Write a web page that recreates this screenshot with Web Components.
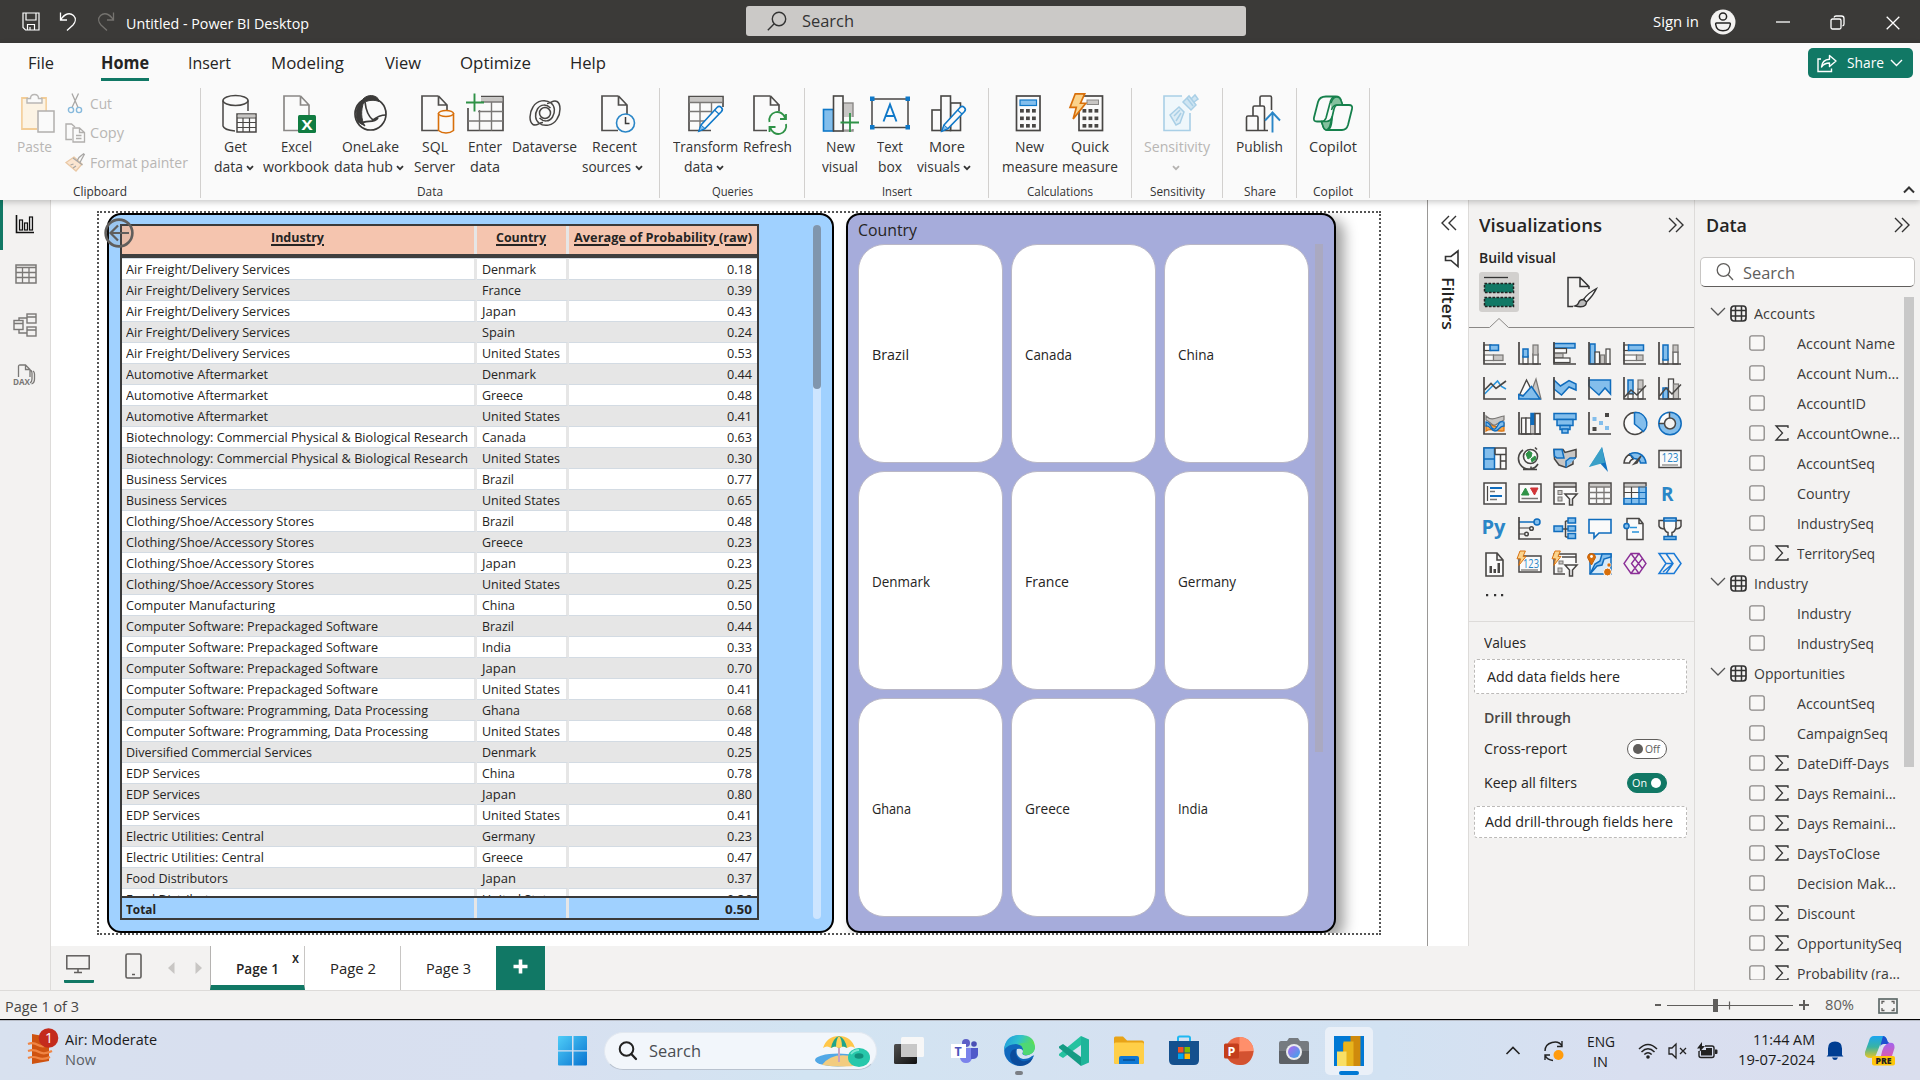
<!DOCTYPE html>
<html lang="en">
<head>
<meta charset="utf-8">
<title>Untitled - Power BI Desktop</title>
<style>
html,body{margin:0;width:1920px;height:1080px;overflow:hidden;background:#f3f2f1;font-family:"Open Sans","Noto Sans",sans-serif}
</style>
</head>
<body>
<power-bi-desktop></power-bi-desktop>
<script>
const BASE = `*{box-sizing:border-box}:host{display:block;box-sizing:border-box}.r{display:flex;align-items:center}.r>div{flex:none;display:flex;align-items:center}.c{display:flex;flex-direction:column}.c>div{flex:none;display:flex;align-items:center}`;
const define = (name, css, html) => customElements.define(name, class extends HTMLElement {
  connectedCallback() {
    if (this.shadowRoot) return;
    this.attachShadow({mode: 'open'}).innerHTML = `<style>${BASE}${css}</style>${typeof html === 'function' ? html(this) : html}`;
  }
});
/* horizontal and vertical flow helpers: each item is [start, size, html, style] */
const row = (x0, items, st = '') => { let c = x0; return `<div class="r" style="${st}">` + items.map(([x, w, h, s = '']) => { const m = x - c; c = x + w; return `<div style="margin-left:${m}px;width:${w}px;${s}">${h}</div>`; }).join('') + '</div>'; };
const col = (y0, items, st = '') => { let c = y0; return `<div class="c" style="${st}">` + items.map(([y, w, h, s = '']) => { const m = y - c; c = y + w; return `<div style="margin-top:${m}px;height:${w}px;${s}">${h}</div>`; }).join('') + '</div>'; };
const T = (w, s, t, c = '#252423', b = 400, f = '') => `<ui-text w="${w}" style="font-size:${s}px;color:${c};font-weight:${b};${f}">${t}</ui-text>`;
const I = (n) => `<ui-icon n="${n}"></ui-icon>`;
const at = (base, s, html, st = '') => [base - 0.388 * s - 10, 20, html, st];

/* single-line text whose advance is fitted to a fixed width */
customElements.define('ui-text', class extends HTMLElement {
  connectedCallback() {
    if (!this.shadowRoot) this.attachShadow({mode: 'open'}).innerHTML = `<style>:host{display:inline-block;flex:none;white-space:nowrap;line-height:20px;height:20px}span{display:inline-block;transform-origin:0 50%}</style><span><slot></slot></span>`;
    const w = +this.getAttribute('w'), s = this.shadowRoot.querySelector('span');
    if (!w) return;
    this.style.width = w + 'px';
    const n = parseFloat(getComputedStyle(s).width);
    if (n) s.style.transform = `scaleX(${w / n})`;
  }
});

const K = '#484644', B = '#0f6cbd', F = '#83beec', G = '#c8c6c4', GS = '#797775', W = '#fafafa', OR = '#d86f0a';
const p = (d, s = K, f = 'none', w = 1.5, x = '') => `<path d="${d}" stroke="${s}" fill="${f}" stroke-width="${w}" ${x}/>`;
const re = (x, y, w, h, s = K, f = 'none', sw = 1.5, e = '') => `<rect x="${x}" y="${y}" width="${w}" height="${h}" stroke="${s}" fill="${f}" stroke-width="${sw}" ${e}/>`;
const ci = (x, y, r, s = K, f = 'none', w = 1.5) => `<circle cx="${x}" cy="${y}" r="${r}" stroke="${s}" fill="${f}" stroke-width="${w}"/>`;
const tx = (x, y, s, t, f, b = 400, e = '') => `<text x="${x}" y="${y}" font-size="${s}" fill="${f}" font-weight="${b}" font-family="Open Sans,sans-serif" ${e}>${t}</text>`;
const doc = p('M18.5 3H2V37.5H18M18.5 3V12H27M18.5 3L27 12V22', '#504e4c', 'none', 1.7);
const pencil = p('M14 32L30 14.5q2-2 4.2-.2t.3 4.3L18 35.5l-6 2.5z', '#0f78c8', W, 1.6) + p('M14 32l4 3.5-6 2.5z', '#0f78c8', F, 1) + p('M27.5 17l4.5 4', '#0f78c8', 'none', 1.2);
const bolt = (x, y, k) => `<path transform="translate(${x} ${y}) scale(${k})" d="M5 0h9l-4 9h5L3 24l3-11H0z" fill="#fbd38b" stroke="${OR}" stroke-width="1.6"/>`;
const ax = p('M1 0V22H23', K, 'none', 1.7);
const keys = (x, y, c) => { let s = ''; for (let i = 0; i < 3; i++) for (let j = 0; j < 3; j++) s += `<rect x="${x + i * 6}" y="${y + j * 7.5}" width="3.8" height="3.6" fill="${c}"/>`; return s; };
const ICONS = {
  save: [18, 19, p('M1 1H17V18H3.5L1 15.5zM4 1V8H14V1M5.5 18V12.500H12.500V18M8 18v-3', '#fff', 'none', 1.2)],
  undo: [18, 20, p('M1.500 .5V8H8M1.500 8C6 1 11 .5 14.500 3.500c3 3 1.800 7-.5 9.500L8 18.500', '#fff', 'none', 1.3)],
  redo: [18, 20, p('M16.500 .5V8H10M16.500 8C12 1 7 .5 3.500 3.500c-3 3-1.800 7 .5 9.500L10 18.500', '#75736f', 'none', 1.3)],
  search: [20, 20, ci(12, 8, 6.7, '#333', 'none', 1.4) + p('M7.200 12.800L.800 19.200', '#333', 'none', 1.4)],
  searchr: [18, 18, ci(7.500, 7, 6.300, '#605e5c', 'none', 1.3) + p('M12 11.500L17 17', '#605e5c', 'none', 1.3)],
  searcht: [20, 20, ci(8.500, 8, 6.800, '#222', 'none', 2) + p('M13.300 13L18 18', '#222', 'none', 2.300, 'stroke-linecap="round"')],
  user: [26, 26, ci(13, 13, 12.500, 'none', '#f3f2f1') + ci(13, 7.500, 3.600, '#252423', 'none', 1.5) + p('M6.500 14h13q1 0 .8 1.500c-.5 4-3.300 6.200-7.300 6.200s-6.800-2.200-7.300-6.200q-.2-1.500.8-1.500z', '#252423', 'none', 1.5)],
  min: [14, 14, p('M0 7H14', '#fff', 'none', 1.3)],
  restore: [15, 15, re(1, 4, 10, 10, '#fff', 'none', 1.3, 'rx="1.500"') + p('M4 2.500q.5-1.500 2-1.500h5.500q2.500 0 2.500 2.500V9q0 1.500-1.500 2', '#fff', 'none', 1.3)],
  close: [14, 14, p('M.7.7L13.300 13.300M13.300.7L.7 13.300', '#fff', 'none', 1.3)],
  share: [20, 20, p('M4 6H1V18.500H14.500V15.500', '#fff', 'none', 1.4) + p('M4.500 14c.5-5 3.500-7.500 8-7.700V2.500L19 8l-6.500 5.500V10C9 10 6.500 11 4.500 14z', '#fff', 'none', 1.4, 'stroke-linejoin="round"')],
  chevw: [13, 8, p('M1 1L6.500 6.500L12 1', '#fff', 'none', 1.4)],
  chev: [8, 6, p('M1 1.200L4 4.200L7 1.200', '#333', 'none', 1.8)],
  chevg: [8, 6, p('M1 1.200L4 4.200L7 1.200', '#b5b3b1', 'none', 1.8)],
  up: [12, 8, p('M1 6.500L6 1.500L11 6.500', '#333', 'none', 2)],
  paste: [36, 42, p('M8 5H2V36H17M21 5h5V18', '#f3cd97', 'none', 1.8) + re(2.800, 6, 22.500, 29, 'none', '#fcf3e4') + p('M7 10V5.500H10.500q0-4 4-4t4 4H22V10z', '#b9b7b5', W, 1.4) + re(18, 18, 16, 21, '#b1afad', W, 1.5)],
  cut: [14, 21, p('M4 .5L10 14.500M10.500 .5L4 14.500', '#a9a7a5', 'none', 1.3) + ci(3, 17, 2.600, '#86b9dc', 'none', 1.4) + ci(11, 17, 2.600, '#86b9dc', 'none', 1.4)],
  copy: [21, 20, p('M7 16.500H1V1H6.500l3.500 3', '#b1afad', 'none', 1.4) + p('M8 5H14.500L19.500 9.500V19H8zM14.500 5V9.500H19.500M11 12.500h5.500M11 15.500h5.500', '#b1afad', 'none', 1.3)],
  painter: [20, 19, p('M9 4L17 11 11 18 1 9.500z', '#eac9a6', '#fbe5d0', 1.3) + p('M8 5L17.500 12M12 8L14 4.500 18.500.8 19.300 1.500 16.500 6.500 15 9.500M5.500 12l3-1M8 15l3-2', '#a9a7a5', 'none', 1.3)],
  getdata: [36, 42, '<ellipse cx="14.500" cy="7.500" rx="12.500" ry="5" stroke="#484644" fill="none" stroke-width="1.500"/>' + p('M2 7.500V33q1 4 12 5M27 7.500V18', K) + re(16, 21, 19, 18, K, W) + re(16.800, 21.500, 17.500, 3, 'none', G) + p('M16 25H35M16 29.500H35M16 34.500H35M22 25V39M28.500 25V39', K, 'none', 1.200)],
  excel: [36, 42, doc.replaceAll('#504e4c', '#8a8886') + re(16, 22, 18, 18, 'none', '#107c41', 0, 'rx="1.500"') + tx(19.500, 36.500, 15, 'X', '#fff', 700, 'textLength="11" lengthAdjust="spacingAndGlyphs"')],
  onelake: [36, 42, '<ellipse cx="18.500" cy="21" rx="15.500" ry="16" fill="none" stroke="#3b3a39" stroke-width="1.700"/>' + p('M11 6c5-5 12-4 15-.5l1 3C22 6.500 16 7 11 10z', '#3b3a39', '#3b3a39', 1) + p('M10 7C5 12 2 21 6 29l7 4C9 27 8.500 17 12 8.500z', '#3b3a39', '#3b3a39', 1) + p('M13 9c1 9 4 15 8 18q6-5 13-5M9 31c4-5 13 0 17-6', '#3b3a39', 'none', 1.700)],
  sql: [36, 42, doc + p('M18.500 20V37.500q3 2.500 7.500 2.500t7.500-2.500V20', OR, W, 1.600) + `<ellipse cx="26" cy="20.500" rx="7.500" ry="3" stroke="${OR}" fill="${W}" stroke-width="1.600"/>`],
  enter: [40, 42, p('M2 15V37.500H37V3.500H15', '#504e4c', 'none', 1.700) + re(15, 4.500, 21.500, 4.500, 'none', G) + p('M15 9H37M12 18.500H37M2 28H37M13.500 17V37.500M25.500 9V37.500', '#797775', 'none', 1.400) + p('M8.500 .5V18.500M0 9.500H18', '#2f9247', 'none', 1.900)],
  dataverse: [38, 42, ci(18, 20, 5.500, K, 'none', 1.500) + p('M24 10c-5-4-14-3-18 4-4 6-4 15 0 17.500 4 2 6-2 10-2M12 30c5 4 14 3 18-4 4-6 4-15 0-17.500-4-2-6 2-10 2M24 10c4 3 4.500 9 1.500 14-3 5-9 5-13 1M12 30c-4-3-4.500-9-1.500-14 3-5 9-5 13-1', K, 'none', 1.500)],
  recent: [38, 42, doc + ci(25.500, 30, 9, '#2a86c7', W, 1.600) + p('M25.500 24V30.500H29.500', '#3b3a39', 'none', 1.500)],
  transform: [38, 42, p('M24 37.500H2V3.500H36V14', '#504e4c', 'none', 1.700) + re(2.800, 4.300, 32.500, 5, 'none', G) + p('M2 9.500H36M2 18.500H25M2 28H18M13 9.500V37.500M24.500 9.500V20', '#797775', 'none', 1.400) + pencil],
  refresh: [38, 42, p('M18.500 3H2V37.500H15M18.500 3V12H27V18M18.500 3L27 12', '#504e4c', 'none', 1.700) + p('M17.500 29a8 8 0 0 1 15.500-4M34 21v5h-6M34 31a8 8 0 0 1-15.500 4M17.500 39v-5h6', '#2f9247', 'none', 1.800)],
  newvisual: [40, 42, re(1.500, 16.500, 10, 21.500, '#0f78c8', F, 1.600) + re(21, 10, 10, 28, '#8a8886', G, 1.400) + re(11.500, 3, 9.500, 35, K, W, 1.600) + re(22, 24, 14, 12, 'none', W, 0) + p('M28 20V39M18.500 29.500H37', '#2f9247', 'none', 1.800)],
  textbox: [42, 42, re(3, 6, 36, 28.500, K, W, 1.500) + ['1,3.500', '36.500,3.500', '1,32', '36.500,32'].map(a => { const [x, y] = a.split(',').map(Number); return re(x, y, 4.500, 4.500, 'none', '#0f78c8'); }).join('') + p('M14.500 28.500L21 11.500L27.500 28.500M16.700 23H25.300', '#0f78c8', 'none', 1.900)],
  morevisuals: [38, 42, re(2, 17, 9, 20.500, K, W, 1.600) + re(20.500, 10, 10, 27.500, K, W, 1.600) + re(11, 3, 9.500, 34.500, K, W, 1.600) + pencil],
  calc: [27, 42, re(1.500, 3, 23.500, 34.500, K, W, 1.700) + re(5, 7, 16.500, 5.500, '#0f78c8', F, 1.200) + keys(5, 16, K)],
  quick: [34, 42, re(9, 3, 23.500, 34.500, K, W, 1.700) + re(17, 7, 11.500, 4.500, '#8a8886', G, 1) + keys(12.500, 16, K) + bolt(0, .8, 1.05)],
  sens: [38, 42, p('M20 3H2V37.500H28V20', '#a9cfe6', '#eff7fb', 1.600) + p('M21 9L27 3L34 12L29 17zM29 6L33 2L36 6L32 9M25 5L31 13', '#a9cfe6', '#cfe5f2', 1.500) + p('M8 22l9-8 5 5-4 11-4 2zM12 23l6-6M14 28l5-8', '#a9cfe6', '#dcecf5', 1.500)],
  publish: [38, 42, p('M16 13V4.500q0-1.500 1.500-1.500H26q1.500 0 1.500 1.500V17M9 23V14.500q0-1.500 1.500-1.500H19q1.500 0 1.500 1.500V37.500M2.500 37.500V24.500q0-1.500 1.500-1.500H12.500q1.500 0 1.500 1.500V37.500zM14 37.500H24', K, 'none', 1.600) + p('M28.500 39.500V20M21 27.500L28.500 19.500L36 27.500', '#2a86c7', 'none', 1.900)],
  copilot: [42, 42, p('M14 3.500H24q4 0 5 4l1.500 4.500H37q4 0 3 4L36 32q-1.500 5-6 5H16q-4 0-5-4l-1.500-4.500H5q-4 0-3-4L6 9q1.500-5.500 8-5.500z', '#16804c', W, 1.800) + p('M19 10q2-6 6-6 3 0 4 3.500l1.500 4.500H25q-4 0-5.500 5', '#16804c', '#84c19e', 1.500) + p('M9.500 28.500H14q5 0 6-5 0 13-5 13.500-3 0-4-4z', '#16804c', '#84c19e', 1.500) + p('M22 4q-3 1-4 6l-4 15q-1.500 4-5 3.500M30.500 12H26q-3 0-4 4L18.500 31q-1 5-4 6', '#16804c', 'none', 1.700)],
  rail1: [20, 19, p('M1.500 0V17.500H19', '#111', 'none', 1.600) + re(4.500, 5, 3, 10, '#111', '#ddd', 1.200) + re(9.500, 8, 3, 7, '#111', '#ddd', 1.200) + re(14.500, 2, 3, 13, '#111', '#ddd', 1.200)],
  rail2: [22, 20, re(1, 1, 20, 18, '#7a7876', 'none', 1.500) + p('M1 3.500H21M1 8.500H21M1 13.500H21M7.500 4V19M14 4V19', '#7a7876', 'none', 1.300)],
  rail3: [24, 24, re(1, 7.500, 9, 9, '#7a7876', 'none', 1.400) + re(14, 1, 9, 9, '#7a7876', 'none', 1.400) + re(14, 14, 9, 9, '#7a7876', 'none', 1.400) + p('M1 10.500H10M14 4H23M14 17H23M6 7V5H14M6 17V20H14', '#7a7876', 'none', 1.400)],
  rail4: [24, 22, p('M5.500 13V2.500Q5.500 1 7 1H12.500L17 5.500V13M12.500 1V5.500H17M17 6q2 .5 2 3V15q0 3-2 4M20 7q1.500 1 1.500 3V15q0 4-3 5', '#7a7876', 'none', 1.300) + tx(0, 20.500, 9, 'DAX', '#7a7876', 700, 'textLength="17" lengthAdjust="spacingAndGlyphs"')],
  back: [30, 30, ci(15, 15, 13.400, '#605e5c', 'rgba(120,120,120,.12)', 2.600) + p('M25 15H7M14 7.500L6.500 15L14 22.500', '#605e5c', 'none', 2.200)],
  ll: [16, 16, p('M8 1L1 8L8 15M15 1L8 8L15 15', '#333', 'none', 1.400)],
  rr: [16, 16, p('M1 1L8 8L1 15M8 1L15 8L8 15', '#333', 'none', 1.400)],
  funnel: [16, 18, p('M14 1V16.500L7 10.500H1.500V6.500H7z', '#333', 'none', 1.600)],
  build: [40, 40, p('M5 5.500H29', '#333', 'none', 1.300) + re(5.500, 11.500, 29, 9, '#222', '#117865', 1.500, 'stroke-dasharray="2.500 1.500"') + re(5.500, 25.500, 29, 9, '#222', '#117865', 1.500, 'stroke-dasharray="2.500 1.500"')],
  format: [32, 32, p('M7 30.500H2V1.500H14L23 10.500V13M14 1.500V10.500H23', '#333', 'none', 1.500) + p('M30.500 12.500Q22 17 17.500 23.500l3 2.500Q27 20 30.500 12.500z', '#333', W, 1.400) + p('M17.500 23.500q-4 0-5 3.500-.5 2-3.500 3 8 2 10.500-1 1-1.500 1-3z', '#333', '#bbb', 1.400)],
  v1: [24, 24, re(1, 3, 7, 5.500, K, W, 1.200) + re(7, 3, 8.500, 5.500, B, F) + re(1, 13, 9.500, 5.500, GS, W, 1.200) + re(10.500, 13, 9.500, 5.500, GS, G, 1.200) + ax],
  v2: [24, 24, re(5, 14, 5, 8, K, W, 1.200) + re(5, 7, 5, 8, B, F) + re(15, 12, 5, 10, K, W, 1.200) + re(15, 3, 5, 10, GS, G, 1.200) + ax],
  v3: [24, 24, re(1, 1.500, 21, 4.500, B, F) + re(1, 6.500, 12.500, 4.500, K, W, 1.200) + re(1, 11.500, 9, 4.500, GS, G, 1.200) + re(1, 16, 16, 4.500, K, W, 1.200) + ax],
  v4: [24, 24, re(2, 2, 5, 20, B, F) + re(7, 10, 4.500, 12, K, W, 1.200) + re(12.500, 13, 4, 9, GS, G, 1.200) + re(18, 7, 4, 15, K, W, 1.200) + ax],
  v5: [24, 24, re(1, 3, 5, 5.500, K, W, 1.200) + re(5.500, 3, 15, 5.500, B, F) + re(1, 13, 12.500, 5.500, GS, W, 1.200) + re(13.500, 13, 6.500, 5.500, GS, G, 1.200) + ax],
  v6: [24, 24, re(5, 17, 5, 5, K, W, 1.200) + re(5, 3, 5, 15, B, F) + re(15, 10, 5, 12, K, W, 1.200) + re(15, 3, 5, 7, GS, G, 1.200) + ax],
  v7: [24, 24, p('M1.500 17L14.500 4L18.500 9.500L23 12', '#2a94dc', 'none', 1.600) + p('M1.500 13L8 6.500L13 11.500L23 4', K, 'none', 1.600) + ax],
  v8: [24, 24, p('M12 18L18 2L23 22H12z', GS, G, 1.200) + p('M1.500 18L8.500 3L17 20z', K, W, 1.400) + p('M.8 22V17.500L5 19L13.500 9.500L22 22z', B, F)],
  v9: [24, 24, p('M1 3L7.500 9L16 3.500L23 7V13L16 10L8.500 18L1 12z', B, F) + ax],
  v10: [24, 24, p('M1 3H22.500V17L17 11L11 18L1 9z', B, F) + ax],
  v11: [24, 24, re(5, 3, 5, 14, B, F) + re(5, 17, 5, 5, K, W, 1.200) + re(15, 12, 5, 10, K, W, 1.200) + re(15, 3, 5, 9, GS, G, 1.200) + p('M1.500 20L8 13L14 18L23 8.500', K, 'none', 1.500) + ax],
  v12: [24, 24, re(5, 11, 5, 11, B, F) + re(10.500, 2, 5, 20, K, W, 1.300) + re(15.500, 7, 5, 15, GS, G, 1.200) + p('M1.500 19L8 11L14 17L23 7.500', K, 'none', 1.500) + ax],
  v13: [24, 24, p('M3 14C8 8 12 20 21 12V19C12 20 8 15 3 19z', OR, '#f7a54a', 1.200) + p('M3 8C7 9 10 16 14 12L21 8V4C14 5 9 10 3 4z', GS, G, 1.200) + p('M3 10c5 0 5 9 9 7 4-3 3-9 9-7v4c-5 0-5 5-9 5s-5-6-9-5z', B, F, 1.300) + ax],
  v14: [24, 24, re(3.500, 6, 4.500, 16, K, W, 1.300) + re(8, 6, 5, 16, K, W, 1.300) + re(13, 1.500, 3, 11, B, B) + re(17, 1.500, 5, 20.500, K, W, 1.500) + re(13, 13, 3, 9, 'none', G) + ax],
  v15: [24, 24, re(1, 1.500, 22, 6, B, F) + re(4, 7.500, 16, 6, B, F) + re(7, 13.500, 10, 4, B, F) + re(9, 17, 6, 4, B, F)],
  v16: [24, 24, re(17, 1, 4, 4, 'none', K) + re(4.500, 5, 4, 4, 'none', F) + re(11, 9, 4, 4, 'none', F) + re(4.500, 15, 4, 4, 'none', K) + re(17, 14, 4, 4, 'none', F) + ax],
  v17: [24, 24, ci(12, 11.500, 11, K, W, 1.500) + p('M11.500 .7A11 11 0 0 1 20.500 19.500L11.500 12z', B, F)],
  v18: [24, 24, ci(12, 11.500, 8.500, F, 'none', 5) + p('M12 3A8.500 8.500 0 0 0 3.500 11.500', W, 'none', 5) + ci(12, 11.500, 11.200, B) + ci(12, 11.500, 5.500, K) + p('M.8 11.500H6.500M11.500 .3V6', K)],
  v19: [24, 24, re(1, 1, 22, 21, K, W) + re(1, 1, 10.500, 21, B, F) + p('M1 12H11.500', B) + p('M12 7.500H23M12 7.500V1M17.500 7.500V22M17.500 14H23', K)],
  v20: [24, 24, p('M5 3A10.500 10.500 0 1 0 20 17M13 19.500v3M5 22.500H19M17 .5l2 2', K, 'none', 1.600) + ci(12.500, 9.500, 7, K, W, 1.600) + p('M8 7l3-3 3 2-1 4-3 2zM13 12l4-3 1 3-4 3z', '#2f9247', '#2f9247', 1)],
  v21: [24, 24, p('M1 2.500H10L12 5.500L23 2.500V10L20 13V17L13 20.500L6 18L1.500 12z', K, G) + p('M1 2.500H9L11 11H4L1.500 9zM13 20.500V14L17 11H23', B, F)],
  v22: [24, 26, '<path d="M14 0L1 20L11 15z" fill="#4bb4d3"/><path d="M14 0L11 15L20 25z" fill="#0f72c0"/><path d="M14 0L1 20L17 15.500z" fill="#3aa0c8"/>'],
  v23: [24, 24, p('M1 16A11 11 0 0 1 7 7L10 12Q7 13 6.500 16z', K, W) + p('M7 7Q12 4.500 17 7T23 16H17.500Q17 12 11 11.500z', B, F) + p('M11 17L18 9L14 16z', K, K)],
  v24: [24, 24, re(1, 3.500, 22, 17, K, W) + tx(3.500, 15, 12.500, '123', '#2a86c7', 400, 'textLength="17" lengthAdjust="spacingAndGlyphs"') + p('M4 18H20', '#8a8886', 'none', 1.300)],
  v25: [24, 24, re(1, 1, 22, 21, K, W) + p('M4.500 4V19', K, 'none', 1.200) + p('M7 6H19M7 14H19', B, 'none', 2.200) + p('M7 9.500H12M7 17.500H14', GS, 'none', 1.500)],
  v26: [24, 24, re(1, 2, 22, 18, K, W) + p('M3.500 13L7.500 6L11 13z', '#2f9247', '#2f9247', 1) + p('M12.500 6H20L16.500 13z', '#d13438', '#d13438', 1) + p('M3.500 16.500H20', GS)],
  v27: [24, 24, p('M12 22H1V1H23V10', K, W) + re(2, 2, 20, 2.500, 'none', G) + p('M1 5H23', K) + re(5, 8.500, 4, 4, GS, G, 1) + re(5, 15, 4, 4, GS, G, 1) + p('M12 12H24L19.500 17V23H16.500V17z', K, W)],
  v28: [24, 24, re(1, 1, 22, 21, K, W) + re(2, 2, 20, 2.500, 'none', G) + p('M1 5H23M1 10.500H23M1 16.500H23M8.500 5V22M16 5V22', GS, 'none', 1.300)],
  v29: [24, 24, re(1, 1, 22, 21, K, W) + re(2, 2, 20, 2.500, 'none', G) + p('M16 5H23V22H1V16.500H16z', F, F) + p('M1 5H23M1 10.500H16M8.500 5V16.500', K, 'none', 1.200) + p('M1 16.500H23M16 5V22M8.500 16V22M16 10.500H23', B, 'none', 1.200) + p('M1 16V22H23V5', B)],
  v30: [24, 24, tx(3, 19, 20, 'R', '#2a86c7', 700, 'textLength="12.500" lengthAdjust="spacingAndGlyphs"')],
  v31: [24, 24, tx(-1.500, 17, 20, 'Py', '#2a86c7', 700, 'textLength="24" lengthAdjust="spacingAndGlyphs"')],
  v32: [24, 24, p('M1 5H16', B) + ci(19, 5, 3, B, F) + p('M1 11H12M1 17H7', GS) + ci(13.500, 11.500, 1.800, K, W) + ci(8.500, 17, 1.800, K, W) + ax],
  v33: [24, 24, p('M8 12H16M12.500 4V20M12.500 4H16M12.500 20H16', K) + re(1, 9, 8.500, 5.500, B, F) + re(15, 1, 7.500, 5, B, F) + re(15, 9, 7.500, 5, B, F) + re(15, 16.500, 7.500, 5, B, F)],
  v34: [24, 24, p('M1 2.500H23V16H11L6 21V16H1z', B, W, 1.600)],
  v35: [24, 24, p('M4 7V1.500H16L20 6.500V22.500H4V12M16 1.500V6.500H20', K, W) + ci(3.500, 9, 2.600, B, F) + p('M7 10.500H14M9 15H16', '#2a94dc', 'none', 1.300)],
  v36: [24, 24, p('M6 3.500H1V9Q2 12 7 12M18 3.500H23V9Q22 12 17 12', K) + p('M6 1.500H18V10Q17 15 14 15.500V19.500H10V15.500Q7 15 6 10z', K, W) + re(6, 1, 12, 3, B, F) + re(6, 19.500, 12, 3, B, F)],
  v37: [24, 25, p('M3 1H14L20 8V24H3zM14 1V8H20', K, W, 1.600) + re(6.500, 14, 2.500, 7, 'none', K) + re(10.500, 17, 2.500, 4, 'none', K) + re(14.500, 11, 2.500, 10, 'none', K)],
  v38: [24, 24, re(1, 4, 22, 16, K, W) + tx(5, 16, 12, '123', '#2a86c7', 400, 'textLength="16" lengthAdjust="spacingAndGlyphs"') + p('M3 18H20', '#8a8886') + bolt(-1, -1, .6)],
  v39: [24, 26, p('M12 22H1V2H23V11', K, W) + re(6, 9, 4, 3, GS, G, 1) + re(5, 16, 4, 4, GS, G, 1) + p('M9 5H23', K) + p('M12 13H24L19.500 18V24H16.500V18z', K, W) + bolt(-1, -1, .6)],
  v40: [24, 26, re(2, 2, 21, 20, B, '#d8ebf9') + p('M2 22L9 14l5-1 2-6 7-2V2L14 2l-2 7-5 3z', B, F) + p('M3.500 13L-.5 5.500a4 4 0 1 1 8 0z', '#c75f06', OR, 1) + ci(3.500, 4.500, 1.400, 'none', '#fff') + ci(21, 13, 2, '#fff', OR, .5) + ci(19.500, 20, 4, '#fff', OR, 1)],
  v41: [24, 24, p('M8 1.500h8L23 11.500 16 21.500H8L1 11.500zM12 7L15.500 11.500 12 16 8.500 11.500zM8 1.500L12 7 16 1.500M8 21.500L12 16 16 21.500M15.500 11.500L19 7M15.500 11.500L19 16', '#8b2f97', 'none', 1.400)],
  v42: [24, 24, p('M1 1.500H16L23 11.500L16 21.500H1L8 11.500zM8 11.500H15M8 1.500L15 11.500L8 21.500M15 11.500L5 20', '#1b7ad6', 'none', 1.500)],
  check: [16, 16, re(.8, .8, 14.400, 14.400, '#8a8886', '#f8f7f6', 1.300, 'rx="2"')],
  sigma: [14, 16, p('M13 3V1H1L7.500 8L1 15H13V13', '#333', 'none', 1.300)],
  tchev: [16, 9, p('M1 1L8 8L15 1', '#555', 'none', 1.300)],
  table: [17, 17, re(1, 1, 15, 15, '#333', 'none', 1.700, 'rx="3"') + p('M1 5.500H16M1 11H16M5.500 1V16M11.500 1V16', '#333', 'none', 1.500)],
  desktop: [24, 19, re(.8, .8, 22.400, 13, '#605e5c', 'none', 1.500) + p('M12 14V17.500M8 17.500H16', '#605e5c', 'none', 1.500)],
  phone: [17, 26, re(1, 1, 15, 24, '#605e5c', 'none', 1.600, 'rx="1.500"') + p('M7 21.500H10', '#605e5c', 'none', 1.500)],
  al: [7, 12, '<path d="M6.500 0V12L0 6z" fill="#c8c6c4"/>'],
  ar: [7, 12, '<path d="M.5 0V12L7 6z" fill="#c8c6c4"/>'],
  plus: [15, 15, p('M7.500 0.500V14.500M.5 7.500H14.500', '#fff', 'none', 3.600)],
  slider: [126, 16, p('M0 8.500H126M62.500 4.500V12.500', '#605e5c', 'none', 1.200) + re(46, 2, 5, 13, 'none', '#605e5c')],
  fit: [20, 16, re(1, 1, 18, 14, '#5f6b6a', 'none', 1.700) + p('M4 6V3.500H6.500M13.500 3.500H16V6M16 10V12.500H13.500M6.500 12.500H4V10', '#605e5c', 'none', 1.300)],
  zplus: [10, 10, p('M5 0V10M0 5H10', '#605e5c', 'none', 2)],
  zmin: [6, 4, p('M0 2H6', '#605e5c', 'none', 2)],
  weather: [32, 38, '<path d="M5 7L22 10V34L5 37z" fill="#cf5310"/>' + p('M1 17Q6 15 11 18T24 17M1 24Q7 22 12 25T25 24M1 31Q6 29 11 31T23 30', '#f08544', 'none', 2.200) + ci(21.500, 11, 9.800, 'none', '#c42b1c') + tx(18, 16, 14, '1', '#fff', 400)],
  win: [30, 30, '<defs><linearGradient id="g" x1="0" y1="0" x2="1" y2="1"><stop offset="0" stop-color="#4fcdf8"/><stop offset="1" stop-color="#0873d0"/></linearGradient></defs><path fill="url(#g)" d="M0 1q0-1 1-1H14V14.200H0zM15.500 0H28q1 0 1 1V14.200H15.500zM0 15.500H14V29.500H1q-1 0-1-1zM15.500 15.500H29V28.500q0 1-1 1H15.500z"/>'],
  beach: [56, 33, '<ellipse cx="24" cy="26" rx="23" ry="6.500" fill="#52a8e6"/><path d="M8 31Q18 17 42 23L46 31Q30 34 8 31z" fill="#f2cc80"/>' + p('M25 4V28', '#c9a3c0', 'none', 2) + '<path d="M9 14Q13 2 25 2T41 14Q37 11 33 14Q29 11 25 14Q21 11 17 14Q13 11 9 14z" fill="#ffc74a"/><path d="M17 14Q19 4 25 2Q31 4 33 14Q29 11 25 14Q21 11 17 14z" fill="#1fa58a"/><path d="M22 13Q22 5 25 2Q28 5 28 13L25 14z" fill="#ffd35a"/><ellipse cx="45" cy="23.500" rx="11" ry="9.500" fill="#27c8ab"/><ellipse cx="45" cy="22" rx="4.500" ry="2.800" fill="#128f7c"/>' + p('M37 20q3-4 8-4', '#7ae8d2', 'none', 2)],
  task: [30, 30, '<defs><linearGradient id="g" x1="0" y1="0" x2="1" y2="1"><stop offset="0" stop-color="#505050"/><stop offset="1" stop-color="#111"/></linearGradient></defs><rect x="0" y="8" width="23" height="20" rx="1.500" fill="url(#g)"/><rect x="7" y="1" width="23" height="20" rx="1.500" fill="#f7f7f7"/><rect x="7" y="8" width="16" height="13" fill="#c8c8c8"/>'],
  teams: [28, 26, ci(15, 5, 4, 'none', '#5b5fc7') + ci(23, 6, 2.800, 'none', '#4a4fb5') + '<path d="M9 10H21V20q-1 5-6 5t-6-5z" fill="#7b83eb"/><path d="M20 10H27V17q-1 4-5 4H20z" fill="#5059c9"/><rect x="0" y="6" width="15" height="14" fill="#fff"/>' + tx(3.500, 17.500, 12.500, 'T', '#4b53bc', 700)],
  edge: [31, 31, '<defs><linearGradient id="g" x1="0" y1="0" x2="1" y2=".3"><stop offset="0" stop-color="#1f97df"/><stop offset=".5" stop-color="#2fc1cf"/><stop offset="1" stop-color="#5fe04c"/></linearGradient></defs><circle cx="15.500" cy="15.500" r="15.300" fill="#1068bd"/><path d="M0 15Q1 0 16 0T31 13Q30 20 22 20Q18 20 19 17Q20 10 12 9Q4 9 0 15z" fill="url(#g)"/><path d="M12 14Q10 22 18 26Q24 27 29 23Q25 31 16 31Q6 30 6 20Q7 14 12 14z" fill="#0c4c9c"/><path d="M13 14Q11 22 19 24Q25 24 28 21L31 20V13Q29 20 22 20.500Q17 20 19 17Q19 13 13 14z" fill="#d4e2f0"/><path d="M19 17Q20 10 14 9Q31 5 31 13Q30 20 22 20Q18 20 19 17z" fill="#4fd873"/>'],
  vscode: [30, 30, '<path d="M22 0L30 3.500V26.500L22 30z" fill="#1fb59a"/><path d="M22 0V9L4 22L0 19.500V18z" fill="#25c2a0"/><path d="M22 30V21L4 8L0 10.500V12z" fill="#149b84"/>'],
  folder: [30, 29, '<path d="M0 2q0-1.500 1.500-1.500H9l4 4H28q2 0 2 2V26q0 2-2 2H2q-2 0-2-2z" fill="#e8a317"/><path d="M0 8q0-1.500 1.500-1.500H28q2 0 2 2V26q0 2-2 2H2q-2 0-2-2z" fill="#ffcf48"/><path d="M5 28V22q0-2 2-2H23q2 0 2 2V28z" fill="#0f78d4"/><path d="M9 24H21" stroke="#094e91" stroke-width="1.500"/>'],
  store: [30, 31, p('M9 8V3Q9 1.500 10.500 1.500H19.500Q21 1.500 21 3V8', '#1fb8f2', 'none', 2) + '<path d="M0 6H30V25q0 5-5 5H5q-5 0-5-5z" fill="#14508e"/><rect x="9" y="12" width="5.500" height="5.500" fill="#f25022"/><rect x="15.500" y="12" width="5.500" height="5.500" fill="#7fba00"/><rect x="9" y="18.500" width="5.500" height="5.500" fill="#00a4ef"/><rect x="15.500" y="18.500" width="5.500" height="5.500" fill="#ffb900"/>'],
  ppt: [30, 30, ci(15.500, 15, 14, 'none', '#ed6c47') + '<path d="M15.500 1A14 14 0 0 1 29.500 15H15.500z" fill="#ff8f6b"/><path d="M2 17Q4 28 15.500 29T29.500 15z" fill="#d35230"/><rect x="0" y="7.500" width="15" height="15" rx="1.500" fill="#c43e1c"/>' + tx(3.500, 19.500, 12.500, 'P', '#fff', 700)],
  camera: [30, 26, '<path d="M8 3L10 0H19L21 3H28q2 0 2 2V24q0 2-2 2H2q-2 0-2-2V5q0-2 2-2z" fill="#767b80"/><path d="M0 13H30V24q0 2-2 2H2q-2 0-2-2z" fill="#5d6166"/>' + ci(15, 14, 8, 'none', '#e9ebee') + '<defs><linearGradient id="g" x1="0" y1="0" x2="1" y2="1"><stop offset="0" stop-color="#b065ef"/><stop offset="1" stop-color="#39a8e8"/></linearGradient></defs><circle cx="15" cy="14" r="6" fill="url(#g)"/>'],
  pbi: [30, 30, '<rect width="30" height="30" fill="#0078d4"/><path d="M16.500 0H26.500V30H9V7H16.500z" fill="#cf8a0c"/><path d="M9.500 5.500H19.500V30H9.500z" fill="#e8b41c"/><path d="M3 15.500H12.500V30H3z" fill="#f9df65"/>'],
  tup: [16, 10, p('M1.500 8L8 1.500L14.500 8', '#222', 'none', 1.600)],
  sync: [22, 22, p('M2 11C2 2 15-1 19 6M19 1V6.500H14M2 20V15H7M2 15Q4 20 10 20.500', '#222', 'none', 1.400) + ci(15.500, 15, 5, 'none', '#ff9b0c')],
  wifi: [20, 16, p('M1 6Q10-3 19 6M3.500 9Q10 2.500 16.500 9M6.300 11.500Q10 8 13.700 11.500', '#222', 'none', 1.500) + ci(10, 14, 1.800, 'none', '#222')],
  mute: [20, 16, p('M1 5H4L8 1V15L4 11H1zM12 5L18 11M18 5L12 11', '#222', 'none', 1.300)],
  battery: [21, 17, p('M4 15.500H15q2 0 2-2V6q0-2-2-2H8M2 9V13.500q0 2 2 2', '#222', 'none', 1.400) + '<path d="M4 8H9L9 6H15V13.500H4zM18 7.500h1.500q1 0 1 1V11q0 1-1 1H18zM5 0L0 6.500H3L2.500 10L8 4H5z" fill="#222"/>'],
  bell: [18, 19, '<path d="M2 14V7.500Q2 .5 9 .5T16 7.500V14L17.500 15.500H.5z" fill="#003e92"/><path d="M6 16.500H12Q11 19 9 19T6 16.500z" fill="#003e92"/>'],
  copcol: [31, 30, '<defs><linearGradient id="g" x1="0" y1="0" x2="0" y2="1"><stop offset="0" stop-color="#1ba5f0"/><stop offset=".5" stop-color="#39b3a3"/><stop offset="1" stop-color="#ecc623"/></linearGradient><linearGradient id="h" x1="0" y1="0" x2="0" y2="1"><stop offset="0" stop-color="#a364ed"/><stop offset="1" stop-color="#f0589a"/></linearGradient></defs><path d="M9 0H18Q21 0 22 4L15 9L11 19Q10 22 6 22Q-1 22 0 16L4 5Q5 0 9 0z" fill="url(#g)"/><path d="M18 0Q21 0 23 6L26 8H19Q16 8 15 11z" fill="#1d50cf"/><path d="M24 7Q30 6 29.500 12L27 20Q25 26 20 26H10L16 20Q18 8 24 7z" fill="url(#h)"/><rect x="7" y="20" width="23" height="9.500" rx="2" fill="#ffc60a"/>' + tx(10.500, 28, 8.500, 'PRE', '#222', 800, 'textLength="16" lengthAdjust="spacingAndGlyphs"')]
};
customElements.define('ui-icon', class extends HTMLElement {
  connectedCallback() {
    if (this.shadowRoot) return;
    const [w, h, s] = ICONS[this.getAttribute('n')];
    this.attachShadow({mode: 'open'}).innerHTML = `<style>:host{display:block;flex:none;width:${w}px;height:${h}px}svg{display:block;overflow:visible}</style><svg width="${w}" height="${h}" viewBox="0 0 ${w} ${h}">${s}</svg>`;
  }
});

define('title-bar', `:host{height:43px;background:#3b3a38}`,
  row(0, [
    [22, 18, I('save')], [59, 18, I('undo')], [97, 18, I('redo')],
    [126, 183, T(183, 14.3, 'Untitled - Power BI Desktop', '#fff'), 'padding-top:5px'],
    [746, 500, row(746, [[767, 20, I('search')], [802, 52, T(52, 16, 'Search', '#333')]], 'height:30px'), 'background:#cbc9c7;border-radius:3px;height:30px;margin-bottom:1.5px'],
    [1653, 46, T(46, 14.5, 'Sign in', '#fff')], [1710, 26, I('user')], [1776, 14, I('min')], [1830, 15, I('restore'), 'padding-top:2px'], [1886, 14, I('close'), 'padding-top:3px']
  ], 'height:43px'));

/* ribbon */
define('ribbon-tabs', `:host{height:38px}`,
  row(0, [
    ...[['File', 28, 26], ['Home', 101, 48], ['Insert', 188, 43], ['Modeling', 271, 73], ['View', 385, 36], ['Optimize', 460, 71], ['Help', 570, 36]].map(([t, x, w], i) =>
      [x, w, T(w, 17, t, '#252423', i === 1 ? 700 : 400), `height:38px;padding-top:4px;border-bottom:3px solid ${i === 1 ? '#117865' : 'transparent'}`]),
    [1808, 105, row(1808, [[1817, 20, I('share')], [1847, 37, T(37, 14.3, 'Share', '#fff', 500)], [1890, 13, I('chevw')]]), 'height:30px;background:#117865;border-radius:5px;margin-top:2px']
  ], 'height:38px'));
define('ribbon-button', '', el => {
  const [x, icon, ix, lines, color] = JSON.parse(el.dataset.v);
  return col(93, [[93, 42, row(x, [[ix, 42, I(icon)]])],
    ...lines.map(([t, tx0, w, chev, cx], i) => at(152.5 + i * 20, 14.5, row(x, [
      ...(t ? [[tx0, w, T(w, 14.5, t, color || '#333')]] : []), ...(chev ? [[cx, 8, I(chev), 'padding-top:3px']] : [])]))) ]);
});
const RB = (x, w, ...v) => [x, w, `<ribbon-button data-v='${JSON.stringify([x, ...v])}'></ribbon-button>`, 'align-items:flex-start'];
define('ribbon-group', `:host{height:110px;flex:none;border-right:1px solid #d2d0ce}`, el => {
  const g = GROUPS[el.dataset.g];
  return col(88, [[93, 85, row(g.x, g.items, 'align-items:flex-start'), 'align-items:flex-start'], at(195.8, 12.7, row(g.x, [[g.lx, g.lw, T(g.lw, 12.7, g.label, '#333')]]))]);
});
const GROUPS = [
  {x: 0, w: 201, label: 'Clipboard', lx: 73, lw: 54, items: [
    RB(0, 60, 'paste', 20, [['Paste', 17, 35]], '#b8b6b4'),
    [64, 130, col(93, [
      [93, 21, row(64, [[68, 14, I('cut')], [90, 22, T(22, 14.5, 'Cut', '#b8b6b4')]])],
      [122, 21, row(64, [[65, 21, I('copy')], [90, 34, T(34, 14.5, 'Copy', '#b8b6b4')]])],
      [152, 21, row(64, [[65, 20, I('painter')], [90, 98, T(98, 14.5, 'Format painter', '#b8b6b4')]])]])]]},
  {x: 201, w: 459, label: 'Data', lx: 417, lw: 26, items: [
    RB(205, 54, 'getdata', 221, [['Get', 224, 23], ['data', 214, 29, 'chev', 246]]),
    RB(260, 72, 'excel', 282, [['Excel', 281, 31], ['workbook', 263, 66]]),
    RB(332, 74, 'onelake', 352, [['OneLake', 342, 57], ['data hub', 334, 59, 'chev', 396]]),
    RB(410, 50, 'sql', 420, [['SQL', 422, 26], ['Server', 414, 41]]),
    RB(462, 44, 'enter', 466, [['Enter', 468, 34], ['data', 470, 30]]),
    RB(510, 68, 'dataverse', 527, [['Dataverse', 512, 65]]),
    RB(580, 66, 'recent', 600, [['Recent', 592, 45], ['sources', 582, 49, 'chev', 635]])]},
  {x: 660, w: 145, label: 'Queries', lx: 712, lw: 41, items: [
    RB(670, 70, 'transform', 687, [['Transform', 673, 65], ['data', 684, 29, 'chev', 716]]),
    RB(741, 54, 'refresh', 752, [['Refresh', 743, 49]])]},
  {x: 805, w: 184, label: 'Insert', lx: 882, lw: 30, items: [
    RB(818, 44, 'newvisual', 822, [['New', 826, 29], ['visual', 822, 36]]),
    RB(868, 44, 'textbox', 869, [['Text', 877, 26], ['box', 878, 24]]),
    RB(915, 60, 'morevisuals', 930, [['More', 929, 36], ['visuals', 917, 43, 'chev', 963]])]},
  {x: 989, w: 143, label: 'Calculations', lx: 1027, lw: 66, items: [
    RB(1000, 60, 'calc', 1015, [['New', 1015, 29], ['measure', 1002, 56]]),
    RB(1061, 60, 'quick', 1070, [['Quick', 1071, 38], ['measure', 1062, 56]])]},
  {x: 1132, w: 91, label: 'Sensitivity', lx: 1150, lw: 55, items: [RB(1142, 70, 'sens', 1162, [['Sensitivity', 1144, 66], ['', 0, 0, 'chevg', 1172]], '#b8b6b4')]},
  {x: 1223, w: 74, label: 'Share', lx: 1244, lw: 32, items: [RB(1230, 60, 'publish', 1244, [['Publish', 1236, 47]])]},
  {x: 1297, w: 73, label: 'Copilot', lx: 1313, lw: 40, items: [RB(1305, 56, 'copilot', 1312, [['Copilot', 1309, 48]])]}
];
define('app-ribbon', `:host{height:157px;background:#fafafa;position:relative;z-index:2;box-shadow:0 2px 6px rgba(0,0,0,.22)}.top{height:45px}.groups{display:flex;align-items:flex-end}.up{margin-left:533px;margin-bottom:4px}`,
  `<div class="top"><ribbon-tabs></ribbon-tabs></div><div class="groups">${GROUPS.map((g, i) => `<ribbon-group data-g="${i}" style="width:${g.w}px"></ribbon-group>`).join('')}<div class="up">${I('up')}</div></div>`);

define('nav-rail', `:host{width:51px;flex:none;background:#f3f2f1;border-right:1px solid #dddbd9;display:flex}i{width:3px;height:50px;background:#117865}`,
  '<i></i>' + col(200, [[215, 19, I('rail1'), 'margin-left:12px'], [264, 20, I('rail2'), 'margin-left:12px'], [312.5, 24, I('rail3'), 'margin-left:10px'], [364, 22, I('rail4'), 'margin-left:10px']]));

/* table visual */
const A = 'Air Freight/Delivery Services', AA = 'Automotive Aftermarket', BT = 'Biotechnology: Commercial Physical &amp; Biological Research', BS = 'Business Services', CL = 'Clothing/Shoe/Accessory Stores', CP = 'Computer Software: Prepackaged Software', CD = 'Computer Software: Programming, Data Processing', US = 'United States';
const WI = {[A]: 164, [AA]: 142, [BT]: 342, [BS]: 101, [CL]: 188, [CP]: 252, [CD]: 302, 'Computer Manufacturing': 149, 'Diversified Commercial Services': 186, 'EDP Services': 74, 'Electric Utilities: Central': 138, 'Food Distributors': 102};
const WC = {Denmark: 54, France: 39, Japan: 34, Spain: 33, [US]: 78, Greece: 41, Canada: 44, Brazil: 32, China: 33, India: 29, Ghana: 38, Germany: 53};
const DATA = [[A, 'Denmark', '0.18'], [A, 'France', '0.39'], [A, 'Japan', '0.43'], [A, 'Spain', '0.24'], [A, US, '0.53'], [AA, 'Denmark', '0.44'], [AA, 'Greece', '0.48'], [AA, US, '0.41'], [BT, 'Canada', '0.63'], [BT, US, '0.30'], [BS, 'Brazil', '0.77'], [BS, US, '0.65'], [CL, 'Brazil', '0.48'], [CL, 'Greece', '0.23'], [CL, 'Japan', '0.23'], [CL, US, '0.25'], ['Computer Manufacturing', 'China', '0.50'], [CP, 'Brazil', '0.44'], [CP, 'India', '0.33'], [CP, 'Japan', '0.70'], [CP, US, '0.41'], [CD, 'Ghana', '0.68'], [CD, US, '0.48'], ['Diversified Commercial Services', 'Denmark', '0.25'], ['EDP Services', 'China', '0.78'], ['EDP Services', 'Japan', '0.80'], ['EDP Services', US, '0.41'], ['Electric Utilities: Central', 'Germany', '0.23'], ['Electric Utilities: Central', 'Greece', '0.47'], ['Food Distributors', 'Japan', '0.37'], ['Food Distributors', US, '0.36']];
define('table-visual', `:host{width:727px;height:720px;flex:none;border:2.500px solid #000;border-radius:14px;background:#a0d1ff;padding:9px 0 0 11px;position:relative;display:flex}
.t{width:639px;height:696px;border:2px solid #3a3a3a;flex:none;display:flex;flex-direction:column}
.row{display:flex;height:21px;flex:none}.row>div{display:flex;align-items:center;border-top:1px solid #d3dbe3}.a{width:355px;padding-left:4px;border-right:3px solid #e6e6e6}.b{width:92px;padding-left:5px;border-right:3px solid #e6e6e6}.v{width:188px;justify-content:flex-end;padding-right:5px}
.body{height:638px;overflow:hidden;background:#fff;flex:none}.body .row:nth-child(even){background:#e6e6e6}
.row.h{height:32px;background:#f5c5af;border-bottom:4px solid #3f3f3f;flex:none}.h>div{border-top:0!important;padding-left:0;justify-content:center;padding-bottom:7px;padding-right:2px}.h>.v{justify-content:flex-end;padding-right:5px}
.row.f{height:22px;border-top:2px solid #3a3a3a}.f>div{border-top:0!important;padding-top:1px}
u{text-decoration-thickness:1.5px;text-underline-offset:2px}
.s{width:8px;height:694px;margin:1px 0 0 54px;background:#cde5ff;border-radius:4px}.s div{height:164px;border-radius:4px;background:#8096ae}
.bk{position:absolute;left:-5px;top:3px}`,
  () => { const H = (w, t) => T(w, 12.8, `<u>${t}</u>`, '#252423', 700);
    return `<div class="t"><div class="row h"><div class="a">${H(53, 'Industry')}</div><div class="b">${H(50, 'Country')}</div><div class="v">${H(178, 'Average of Probability (raw)')}</div></div><div class="body">${DATA.map(r => `<div class="row"><div class="a">${T(WI[r[0]], 12.7, r[0])}</div><div class="b">${T(WC[r[1]], 12.7, r[1])}</div><div class="v">${T(25, 12.7, r[2])}</div></div>`).join('')}</div><div class="row f"><div class="a">${T(30, 12.7, 'Total', '#252423', 700)}</div><div class="b"></div><div class="v">${T(27, 12.7, '0.50', '#252423', 700)}</div></div></div><div class="s"><div></div></div><div class="bk">${I('back')}</div>`; });
define('slicer-visual', `:host{width:490px;height:720px;flex:none;margin-left:12px;border:2.500px solid #000;border-radius:14px;background:#a6acdb;box-shadow:8px 6px 14px rgba(0,0,0,.38);padding:4px 0 0 10px}
.m{display:flex;margin-top:3px}.g{display:grid;grid-template-columns:repeat(3,145px);grid-template-rows:repeat(3,218.500px);gap:8.500px 8px}.g div{background:#fff;border:1px solid #b9b7c6;border-radius:26px;display:flex;align-items:center;padding:4px 0 0 13px}.s{width:8px;height:508px;background:#aaa9c1;margin-left:6px}.tt{height:22px}`,
  () => `<div class="tt">${T(59, 15.5, 'Country', '#252423')}</div><div class="m"><div class="g">${[['Brazil', 37], ['Canada', 47], ['China', 36], ['Denmark', 58], ['France', 44], ['Germany', 58], ['Ghana', 39], ['Greece', 45], ['India', 30]].map(([t, w]) => `<div>${T(w, 13.8, t)}</div>`).join('')}</div><div class="s"></div></div>`);
define('report-canvas', `:host{height:746px;background:#fff;padding:11px 0 0 46px;overflow:hidden}.pg{width:1284px;height:724px;border:2px dotted #555;display:flex;padding-left:8px;overflow:hidden}`, '<div class="pg"><table-visual></table-visual><slicer-visual></slicer-visual></div>');
define('page-tabs', `:host{height:44px;background:#f3f2f1}`,
  row(51, [[64, 30, I('desktop'), 'height:30px;padding-left:2px;border-bottom:3px solid #117865;border-radius:1px;padding-bottom:4px;margin-top:0'], [125, 17, I('phone'), 'padding-bottom:5px'], [168, 7, I('al')], [195, 7, I('ar')],
    [210, 95, row(211, [[236, 43, T(43, 14.5, 'Page 1', '#252423', 600)], [292, 7, T(7, 13.5, 'x', '#252423', 600), 'padding-bottom:22px']], 'padding-top:6px'), 'height:44px;background:#fff;border-left:1px solid #b5b3b1;border-right:1px solid #c8c6c4;border-bottom:5px solid #117865'],
    [305, 96, T(46, 14.5, 'Page 2'), 'height:44px;background:#fff;border-right:1px solid #c8c6c4;padding:2px 0 0 25px'],
    [401, 95, T(45, 14.5, 'Page 3'), 'height:44px;background:#fff;padding:2px 0 0 25px'],
    [496, 49, I('plus'), 'height:44px;background:#117865;justify-content:center;padding-bottom:3px']], 'height:44px'));
define('filters-pane', `:host{width:42px;flex:none;background:#fff;border-left:1px solid #9a9896;border-right:1px solid #dddbd9;height:746px}.f{transform:rotate(90deg);transform-origin:0 0;width:53px;height:20px;margin-left:31px}`,
  col(200, [[215, 16, I('ll'), 'margin-left:13px'], [250, 18, I('funnel'), 'margin-left:16px'], [277, 20, `<div class="f">${T(53, 16, 'Filters', '#252423', 600)}</div>`]]));

define('toggle-switch', `:host{width:40px;height:20px;border-radius:10px;border:1px solid #605e5c;background:#fff;display:flex;align-items:center;padding:0 5px;gap:2px}:host([on]){background:#117865;border-color:#117865;flex-direction:row-reverse;gap:4px}i{width:10px;height:10px;border-radius:5px;background:#605e5c;flex:none}:host([on]) i{background:#fff}`,
  el => el.hasAttribute('on') ? '<i></i>' + T(15, 11, 'On', '#fff', 400) : '<i></i>' + T(15, 11, 'Off', '#605e5c', 400));
define('visual-gallery', `:host{display:grid;grid-template-columns:repeat(6,35px);grid-auto-rows:35px;width:210px}`, Array.from({length: 42}, (_, i) => I('v' + (i + 1))).join(''));
define('visualizations-pane', `:host{width:226px;flex:none;background:#f3f2f1;border-right:1px solid #dddbd9}`,
  () => { const bx = 'background:#fff;border:1px dashed #bcbab8;border-radius:3px;';
    return col(200, [
      at(232, 18, row(1469, [[1479, 123, T(123, 18, 'Visualizations', '#252423', 600)], [1668, 16, I('rr')]])),
      at(264, 14.5, row(1469, [[1479, 77, T(77, 14.5, 'Build visual', '#252423', 600)]])),
      [272, 40, row(1469, [[1479, 40, I('build'), 'background:#d2d0ce;border-radius:3px'], [1566, 32, I('format')]])],
      [317, 11, '<svg width="225" height="11"><path d="M0 10.500H20.500L30 1.500L39.500 10.500H225" fill="none" stroke="#8a8886"/></svg>'],
      [342, 245, '<visual-gallery></visual-gallery>', 'margin-left:13.5px'],
      [592, 6, '<svg width="20" height="6"><path d="M1 2h2.200v2.200H1zM9 2h2.200v2.200H9zM16 2h2.200v2.200H16z" fill="#333"/></svg>', 'margin-left:16px'],
      [621, 1, '', 'background:#dddbd9'],
      at(648.7, 14.5, T(42, 14.5, 'Values'), 'margin-left:15px'),
      [659, 35, T(133, 14.5, 'Add data fields here'), bx + 'width:213px;margin-left:5px;padding:1px 0 0 12px'],
      at(723.7, 14.5, T(87, 14.5, 'Drill through', '#484644', 600), 'margin-left:15px'),
      [739, 20, row(1469, [[1484, 83, T(83, 14.5, 'Cross-report')], [1627, 40, '<toggle-switch></toggle-switch>']])],
      [773, 20, row(1469, [[1484, 93, T(93, 14.5, 'Keep all filters')], [1627, 40, '<toggle-switch on></toggle-switch>']])],
      [806, 32, T(188, 14.5, 'Add drill-through fields here'), bx + 'width:213px;margin-left:5px;padding:1px 0 0 10px']]); });
const TREE = [['g', 'Accounts', 61], ['', 'Account Name', 98], ['', 'Account Num...', 102], ['', 'AccountID', 69], ['s', 'AccountOwne...', 103], ['', 'AccountSeq', 78], ['', 'Country', 53], ['', 'IndustrySeq', 77], ['s', 'TerritorySeq', 78], ['g', 'Industry', 54], ['', 'Industry', 54], ['', 'IndustrySeq', 77], ['g', 'Opportunities', 91], ['', 'AccountSeq', 78], ['', 'CampaignSeq', 91], ['s', 'DateDiff-Days', 92], ['s', 'Days Remaini...', 99], ['s', 'Days Remaini...', 99], ['s', 'DaysToClose', 83], ['', 'Decision Mak...', 99], ['s', 'Discount', 58], ['s', 'OpportunitySeq', 105], ['s', 'Probability (ra...', 103]];
define('field-tree', `:host{height:683px;width:225px;overflow:hidden;display:flex}.l{width:209px;flex:none;padding-top:1.5px}.s{width:10px;height:470px;background:#c8c8c8;flex:none}`,
  `<div class="l">${TREE.map(([k, t, w]) => row(1696, k === 'g' ? [[1711, 16, I('tchev'), 'padding-bottom:3px'], [1731, 17, I('table')], [1754.5, w, T(w, 14.5, t, '#3b3a39'), 'padding-top:1.5px']] : [[1750, 16, I('check')], ...(k ? [[1776, 14, I('sigma')]] : []), [1798, w, T(w, 14.5, t, '#3b3a39'), 'padding-top:1px']], 'height:30px')).join('')}</div><div class="s"></div>`);
define('data-pane', `:host{flex:1;background:#f3f2f1}`, col(200, [
  at(232, 18, row(1695, [[1706, 41, T(41, 18, 'Data', '#252423', 600)], [1894, 16, I('rr')]])),
  [257, 30, row(1700, [[1715, 18, I('searchr')], [1742, 52, T(52, 15.5, 'Search', '#605e5c'), 'padding-top:2px']]), 'width:215px;margin-left:5px;background:#fff;border:1px solid #c8c6c4;border-bottom-color:#605e5c;border-radius:5px'],
  [297, 683, '<field-tree></field-tree>']]));
define('status-bar', `:host{height:30px;background:#f3f2f1;border-top:1px solid #dddbd9;border-bottom:1px solid #000}`,
  row(0, [[5, 74, T(74, 14.5, 'Page 1 of 3', '#484644'), 'padding-top:3px'], [1655, 6, I('zmin')], [1667, 126, I('slider')], [1799, 10, I('zplus')], [1825, 29, T(29, 14.3, '80%', '#605e5c')], [1878, 20, I('fit'), 'padding-top:2px']], 'height:28px'));
define('task-bar', `:host{height:60px;background:linear-gradient(90deg,#d8e1ef 0,#d8dfef 12%,#d8e0f0 28%,#d2e4f2 42%,#d5e1f1 60%,#d2e2f2 72%,#d9dff0 85%,#dadeee 100%);border-top:1px solid #b7bcc6}`,
  () => row(0, [
    [27, 32, I('weather'), 'padding-bottom:9px'],
    [65, 95, col(1020, [at(1044, 14.5, T(92, 14.5, 'Air: Moderate', '#1b1b1b')), at(1064, 14.5, T(31, 14.5, 'Now', '#5a5f66'))]), 'height:58px;align-items:flex-start'],
    [558, 30, I('win')],
    [604, 273, row(605, [[618, 20, I('searcht')], [649, 52, T(52, 15.5, 'Search', '#4a4d52')], [814, 56, I('beach')]]), 'height:38px;background:#f2f6fb;border-radius:19px;border:1px solid #e2e8f0;border-bottom-color:#b9c2cf'],
    [894, 30, I('task')], [951, 28, I('teams')],
    [1004, 31, col(0, [[0, 31, I('edge')], [36, 4, '', 'width:8px;margin-left:11px;border-radius:2px;background:#7b7f85']]), 'padding-top:9px'],
    [1059, 30, I('vscode')], [1114, 30, I('folder')], [1169, 30, I('store')], [1224, 30, I('ppt')], [1279, 30, I('camera')],
    [1325, 48, col(0, [[9, 30, I('pbi')], [44, 4, '', 'width:20px;margin-left:5px;border-radius:2px;background:#0078d4']]), 'height:48px;background:#eaf0f8;border-radius:5px;padding-left:9px;align-items:flex-start'],
    [1505, 16, I('tup')], [1543, 22, I('sync')],
    [1587, 30, col(1020, [at(1045.5, 14, T(28, 14, 'ENG', '#1b1b1b')), at(1065.500, 14, T(15, 14, 'IN', '#1b1b1b'), 'margin-left:6px')]), 'height:58px;align-items:flex-start'],
    [1638, 20, I('wifi')], [1668, 20, I('mute')], [1697, 21, I('battery')],
    [1738, 77, col(1020, [at(1043.500, 14, T(62, 14, '11:44 AM', '#1b1b1b'), 'margin-left:15px'), at(1064, 14, T(77, 14, '19-07-2024', '#1b1b1b'))]), 'height:58px;align-items:flex-start'],
    [1826, 18, I('bell')], [1865, 31, I('copcol')]], 'height:59px'));
define('power-bi-desktop', `:host{width:1920px;height:1080px;display:flex;flex-direction:column;overflow:hidden}.w{height:790px;display:flex;flex:none}.mid{width:1418px;flex:none}.mt{display:flex;height:746px}report-canvas{width:1376px;flex:none}title-bar,app-ribbon,status-bar,task-bar{flex:none}`,
  `<title-bar></title-bar><app-ribbon></app-ribbon><div class="w"><nav-rail></nav-rail><div class="mid"><div class="mt"><report-canvas></report-canvas><filters-pane></filters-pane></div><page-tabs></page-tabs></div><visualizations-pane></visualizations-pane><data-pane></data-pane></div><status-bar></status-bar><task-bar></task-bar>`);
</script>
</body>
</html>
